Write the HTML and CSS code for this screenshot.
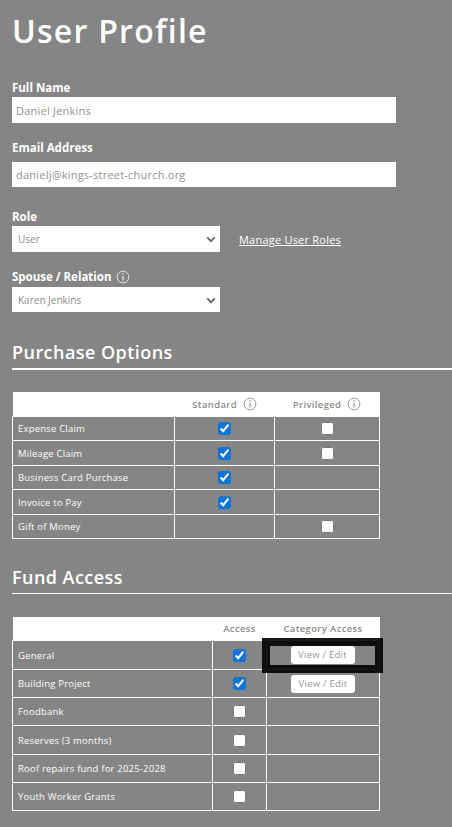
FILE: index.html
```html
<!DOCTYPE html>
<html lang="en">
<head>
    <meta charset="UTF-8">
    <meta name="viewport" content="width=device-width, initial-scale=1.0">
    <title>User Profile</title>
    <link rel="stylesheet" href="styles.css">
</head>
<body>
    <h1>User Profile</h1>

    <div class="field field-name">
        <label>Full Name</label>
        <input class="text-input name-input" type="text" value="Daniel Jenkins">
    </div>

    <div class="field field-email">
        <label>Email Address</label>
        <input class="text-input email-input" type="text" value="danielj@kings-street-church.org">
    </div>

    <div class="field field-role">
        <label>Role</label>
        <div class="select-row">
            <div class="select-wrap role-select">
                <select><option>User</option></select>
                <svg class="chevron" viewBox="0 0 12 8"><path d="M1.500 1.500 6 6l4.500-4.500" fill="none" stroke="#666" stroke-width="2.200"/></svg>
            </div>
            <a href="#" class="manage-link">Manage User Roles</a>
        </div>
    </div>

    <div class="field field-spouse">
        <label>Spouse / Relation
            <svg class="info info-light" viewBox="0 0 14 14"><circle cx="7" cy="7" r="5.900" fill="none" stroke="currentColor" stroke-width="1"/><path d="M7 6v4.500M7 3.300v1.500" stroke="currentColor" stroke-width="1.300"/></svg>
        </label>
        <div class="select-wrap spouse-select">
            <select><option>Karen Jenkins</option></select>
            <svg class="chevron" viewBox="0 0 12 8"><path d="M1.500 1.500 6 6l4.500-4.500" fill="none" stroke="#666" stroke-width="2.200"/></svg>
        </div>
    </div>

    <h2 class="purchase-title">Purchase Options</h2>

    <table class="grid purchase-grid">
        <thead>
            <tr>
                <th></th>
                <th>Standard <svg class="info" viewBox="0 0 14 14"><circle cx="7" cy="7" r="5.900" fill="none" stroke="currentColor" stroke-width="1"/><path d="M7 6v4.500M7 3.300v1.500" stroke="currentColor" stroke-width="1.300"/></svg></th>
                <th>Privileged <svg class="info" viewBox="0 0 14 14"><circle cx="7" cy="7" r="5.900" fill="none" stroke="currentColor" stroke-width="1"/><path d="M7 6v4.500M7 3.300v1.500" stroke="currentColor" stroke-width="1.300"/></svg></th>
            </tr>
        </thead>
        <tbody>
            <tr><td>Expense Claim</td><td><input type="checkbox" checked></td><td><input type="checkbox"></td></tr>
            <tr><td>Mileage Claim</td><td><input type="checkbox" checked></td><td><input type="checkbox"></td></tr>
            <tr><td>Business Card Purchase</td><td><input type="checkbox" checked></td><td></td></tr>
            <tr><td>Invoice to Pay</td><td><input type="checkbox" checked></td><td></td></tr>
            <tr><td>Gift of Money</td><td></td><td><input type="checkbox"></td></tr>
        </tbody>
    </table>

    <h2 class="fund-title">Fund Access</h2>

    <table class="grid fund-grid">
        <thead>
            <tr><th></th><th>Access</th><th>Category Access</th></tr>
        </thead>
        <tbody>
            <tr><td>General</td><td><input type="checkbox" checked></td><td><div class="focus-box"><button>View / Edit</button></div></td></tr>
            <tr><td>Building Project</td><td><input type="checkbox" checked></td><td><button>View / Edit</button></td></tr>
            <tr><td>Foodbank</td><td><input type="checkbox"></td><td></td></tr>
            <tr><td>Reserves (3 months)</td><td><input type="checkbox"></td><td></td></tr>
            <tr><td>Roof repairs fund for 2025-2028</td><td><input type="checkbox"></td><td></td></tr>
            <tr><td>Youth Worker Grants</td><td><input type="checkbox"></td><td></td></tr>
        </tbody>
    </table>
</body>
</html>
```

FILE: styles.css
```css
body {
    margin: 0;
    padding: 0 0 17px 12px;
    background: #858585;
    color: #fff;
    font-family: "Open Sans", sans-serif;
    overflow-x: hidden;
}
h1 {
    margin: 0;
    padding-top: 9px;
    font-size: 32px;
    line-height: 44px;
    font-weight: 600;
    letter-spacing: 1.250px;
}
h2 {
    margin: 0;
    padding-bottom: 3px;
    font-size: 18px;
    line-height: 25px;
    font-weight: 600;
    letter-spacing: 0.450px;
    border-bottom: 2px solid #fff;
}
label {
    display: block;
    font-size: 11.500px;
    line-height: 16px;
    font-weight: 700;
}
.field-name { margin-top: 27px; }
.field-email { margin-top: 17px; }
.field-role { margin-top: 22px; }
.field-spouse { margin-top: 17px; }
.field label { margin-bottom: 2px; }
.field-name label { margin-bottom: 1px; }
.field-role label { margin-bottom: 1px; }
.field-email label { margin-bottom: 6px; }
.text-input {
    display: block;
    box-sizing: border-box;
    width: 384px;
    border: none;
    border-radius: 0;
    background: #fff;
    padding: 0 4px;
    color: #929292;
    font-family: "Open Sans", sans-serif;
    font-size: 11px;
    letter-spacing: 0.220px;
}
.name-input { height: 26px; }
.email-input { height: 25px; }
.select-row {
    display: flex;
    align-items: center;
    gap: 19px;
}
.select-wrap {
    position: relative;
    width: 208px;
}
.select-wrap select {
    display: block;
    width: 100%;
    appearance: none;
    border: none;
    border-radius: 0;
    background: #fff;
    padding: 0 6px;
    color: #8d8d8d;
    font-family: "Open Sans", sans-serif;
    font-size: 10px;
}
.role-select select { height: 26px; }
.spouse-select select { height: 25px; }
.chevron {
    position: absolute;
    right: 4px;
    top: 50%;
    width: 10px;
    height: 7px;
    margin-top: -3px;
}
.manage-link {
    color: #fff;
    font-size: 11px;
    letter-spacing: 0.220px;
}
.info {
    width: 14px;
    height: 14px;
    vertical-align: -3px;
    color: #9a9a9a;
    margin-left: 3px;
}
.info-light {
    color: #e4e4e4;
    margin-left: 1px;
}
.purchase-title { margin-top: 28px; }
.fund-title {
    margin-top: 26px;
    border-bottom-width: 1px;
}
.grid {
    border-collapse: collapse;
    width: 368px;
    table-layout: fixed;
    font-size: 9.500px;
}
.grid th {
    background: #fff;
    color: #8a8a8a;
    font-size: 9.500px;
    font-weight: 600;
    letter-spacing: 0.350px;
    text-align: center;
    padding: 0;
    border: none;
}
.grid td {
    border: 1px solid #fff;
    padding: 0 0 0 5px;
    color: #fff;
    letter-spacing: 0.200px;
}
.grid td + td {
    padding: 0;
    text-align: center;
}
.grid input[type="checkbox"] {
    display: block;
    margin: 0 auto;
    width: 13px;
    height: 13px;
    accent-color: #0a74da;
}
.purchase-grid { margin-top: 22px; }
.purchase-grid th { height: 24px; }
.purchase-grid td { height: 24px; }
.purchase-grid tr:first-child td { height: 23px; }
.purchase-grid tr:nth-child(3) td,
.purchase-grid tr:nth-child(5) td { height: 23px; }
.purchase-grid th:nth-child(1) { width: 162px; }
.purchase-grid th:nth-child(2) { width: 100px; }
.fund-grid { margin-top: 23px; }
.fund-grid th { height: 23px; }
.fund-grid td { height: 27px; }
.fund-grid tr:first-child td { height: 28px; }
.fund-grid tr:nth-child(4) td { height: 28px; }
.fund-grid th:nth-child(1) { width: 200px; }
.fund-grid th:nth-child(2) { width: 54px; }
button {
    display: block;
    margin: 0 auto;
    width: 64px;
    height: 18px;
    border: none;
    border-radius: 3px;
    background: #fff;
    color: #9a9a9a;
    font-family: "Open Sans", sans-serif;
    font-size: 9.500px;
    letter-spacing: 0.250px;
    padding: 0;
}
.focus-box {
    margin: 0 4px 0 3px;
    height: 19px;
    outline: 8px solid rgba(0, 0, 0, 0.9);
}
```
